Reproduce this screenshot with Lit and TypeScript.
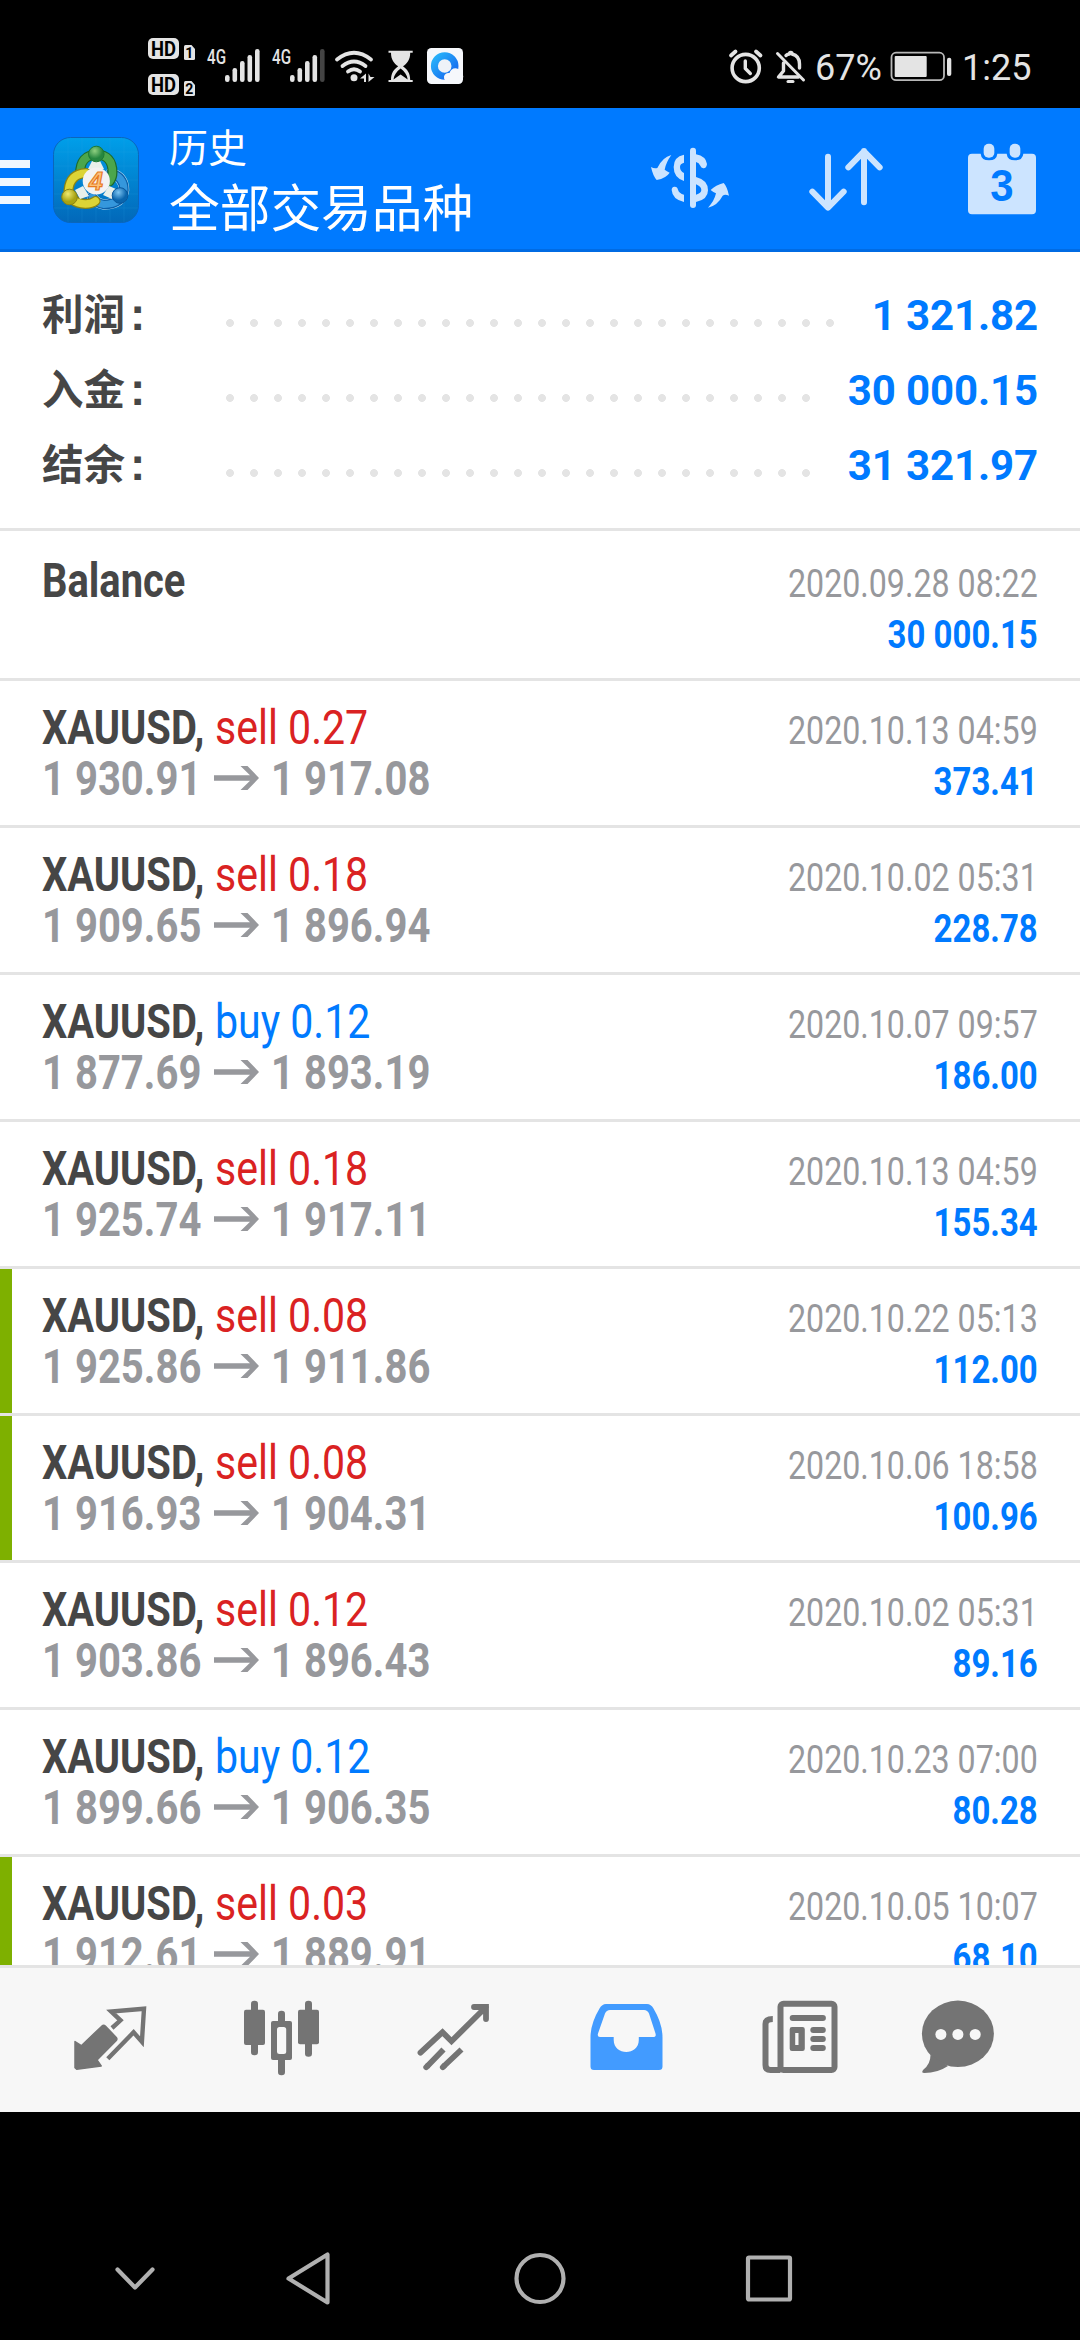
import { LitElement, html, css, svg } from "lit";
import { customElement, property } from "lit/decorators.js";
import { classMap } from "lit/directives/class-map.js";

interface Deal {
  symbol: string;
  side?: "buy" | "sell";
  volume?: string;
  open?: string;
  close?: string;
  time: string;
  profit: string;
  marked?: boolean;
}

const deal = (
  side: "buy" | "sell",
  volume: string,
  open: string,
  close: string,
  time: string,
  profit: string,
  marked = false,
): Deal => ({ symbol: "XAUUSD,", side, volume, open, close, time, profit, marked });

const DEALS: Deal[] = [
  { symbol: "Balance", time: "2020.09.28 08:22", profit: "30 000.15" },
  deal("sell", "0.27", "1 930.91", "1 917.08", "2020.10.13 04:59", "373.41"),
  deal("sell", "0.18", "1 909.65", "1 896.94", "2020.10.02 05:31", "228.78"),
  deal("buy", "0.12", "1 877.69", "1 893.19", "2020.10.07 09:57", "186.00"),
  deal("sell", "0.18", "1 925.74", "1 917.11", "2020.10.13 04:59", "155.34"),
  deal("sell", "0.08", "1 925.86", "1 911.86", "2020.10.22 05:13", "112.00", true),
  deal("sell", "0.08", "1 916.93", "1 904.31", "2020.10.06 18:58", "100.96", true),
  deal("sell", "0.12", "1 903.86", "1 896.43", "2020.10.02 05:31", "89.16"),
  deal("buy", "0.12", "1 899.66", "1 906.35", "2020.10.23 07:00", "80.28"),
  deal("sell", "0.03", "1 912.61", "1 889.91", "2020.10.05 10:07", "68.10", true),
];

@customElement("status-bar")
export class StatusBar extends LitElement {
  static styles = css`
    :host {
      display: flex;
      height: 108px;
      background: #000;
      color: #e4e4e4;
      font: 36px/50px Roboto, sans-serif;
      box-sizing: border-box;
      padding: 0 50px 0 146px;
    }
    svg {
      display: block;
      flex: none;
    }
    .spacer {
      flex: 1;
    }
    .hd {
      font: bold 20px Roboto, sans-serif;
    }
    .sim {
      font: bold 14px Roboto, sans-serif;
    }
    .net {
      font: 500 21px Roboto, sans-serif;
    }
    .percent,
    .clock {
      margin-top: 43px;
      height: 50px;
      white-space: nowrap;
    }
    .percent {
      width: 75px;
    }
    .clock {
      width: 68px;
    }
  `;

  private bars(x: number, dim: boolean) {
    return [75, 68, 61, 55, 49].map(
      (top, i) =>
        svg`<rect x=${x + i * 7.5} y=${top} width="4.6" height=${82 - top} rx="2.2" fill=${dim && i === 4 ? "#444" : "#e4e4e4"} />`,
    );
  }

  render() {
    return html`
      <svg width="324" height="108" viewBox="146 0 324 108" fill="#e4e4e4">
        <rect x="148" y="38" width="31" height="21" rx="5" />
        <rect x="148" y="74" width="31" height="21" rx="5" />
        <text class="hd" x="151" y="55.5" textLength="25" lengthAdjust="spacingAndGlyphs" fill="#000">HD</text>
        <text class="hd" x="151" y="91.5" textLength="25" lengthAdjust="spacingAndGlyphs" fill="#000">HD</text>
        <path d="M184 46.5q0-1.500 1.500-1.500h6l3.500 4v9.500q0 1.500-1.500 1.500h-8q-1.500 0-1.500-1.500z" />
        <path d="M184 82.500q0-1.500 1.500-1.500h6l3.500 4v9.500q0 1.500-1.500 1.500h-8q-1.500 0-1.500-1.500z" />
        <text class="sim" x="185.300" y="58" fill="#000">1</text>
        <text class="sim" x="185.300" y="94" fill="#000">2</text>
        <text class="net" x="207" y="64" textLength="19" lengthAdjust="spacingAndGlyphs">4G</text>
        ${this.bars(225, false)}
        <text class="net" x="272" y="64" textLength="19" lengthAdjust="spacingAndGlyphs">4G</text>
        ${this.bars(290, true)}
        <g fill="none" stroke="#e4e4e4" stroke-width="3.800" stroke-linecap="round">
          <path d="M337 59.500q17-13.500 34 0" />
          <path d="M342.500 66q11.500-9 23 0" />
          <path d="M348 71.500q6-4.500 12 0" />
        </g>
        <circle cx="354" cy="77.700" r="3.500" />
        <path d="M360 78.500l6-5v8.500h-2v-3.500zM368.500 73.500v8.500l6-5h-4z" />
        <path d="M388.500 50.700h24.200v2h-2.500c0 7-3 10.500-7.200 13.600 4.200 3.100 7.200 6.700 7.200 13.600h2.500v2.100h-24.200v-2.100h2.500c0-7 3-10.500 7.200-13.600-4.200-3.100-7.200-6.600-7.200-13.600h-2.500z" />
        <path d="M393.500 79.500c.5-4.500 3.200-8 7.100-11 3.900 3 6.600 6.500 7.100 11l-7.100-5z" fill="#000" />
        <rect x="427" y="48" width="36" height="36" rx="4.500" fill="#f6f8fc" />
        <defs>
          <linearGradient id="ring" x1="0" y1="0" x2="1" y2="1">
            <stop offset="0" stop-color="#28b4fa" />
            <stop offset="1" stop-color="#1565ee" />
          </linearGradient>
        </defs>
        <circle cx="444.700" cy="66" r="10.300" fill="#eef2f8" stroke="url(#ring)" stroke-width="7" />
        <path d="M449 81.500q-5.500-.500-5-5 1-4 5.500-3.500 2-5.500 7.500-4.500 3.500 1 4 4.500 3 2 2 5-1 3.500-5 3.500z" fill="#f6f8fc" />
      </svg>
      <span class="spacer"></span>
      <svg width="87" height="108" viewBox="728 0 87 108" fill="none" stroke="#e4e4e4" stroke-linecap="round" stroke-linejoin="round">
        <circle cx="745.700" cy="68" r="13.600" stroke-width="3.600" />
        <path d="M745.300 61v7.500l5 5" stroke-width="3.400" />
        <path d="M731 55.500l4.500-4M760.500 55.500l-4.500-4" stroke-width="3.800" />
        <path d="M777.500 53.500l26 26.500" stroke-width="3" />
        <path d="M783.500 63v8l-5 6h20" stroke-width="3.400" />
        <path d="M786 55.500c1-1 2-1.500 3.500-1.500a1.300 1.300 0 1 1 2.500 0c6 1.500 7.500 5.500 7.500 10v4" stroke-width="3.400" />
        <path d="M788 81.500h5" stroke-width="3" />
      </svg>
      <span class="percent">67%</span>
      <svg width="72" height="108" viewBox="888 0 72 108">
        <rect x="889.500" y="52.700" width="52.500" height="27.500" rx="4.500" fill="none" stroke="#b8b8b8" stroke-width="1.800" />
        <rect x="892.700" y="56" width="32" height="21" rx="1" fill="#e4e4e4" />
        <rect x="945" y="57.700" width="4.300" height="18.300" rx="2" fill="#e4e4e4" />
      </svg>
      <span class="clock">1:25</span>
    `;
  }
}

@customElement("app-header")
export class AppHeader extends LitElement {
  static styles = css`
    :host {
      display: flex;
      align-items: flex-start;
      height: 144px;
      box-sizing: border-box;
      background: #007aff;
      border-bottom: 3px solid #006be3;
      color: #fff;
      font-family: "Noto Sans CJK SC", sans-serif;
    }
    svg {
      display: block;
      flex: none;
    }
    .menu {
      display: grid;
      gap: 10px;
      width: 30px;
      margin-top: 52px;
    }
    .menu i {
      height: 8px;
      background: #f0f7ff;
    }
    .logo {
      margin: 29px 0 0 23px;
    }
    .digit {
      font: bold italic 25px "Liberation Sans", sans-serif;
    }
    .titles {
      margin: 13px 0 0 30px;
      width: 479px;
      white-space: nowrap;
    }
    .section {
      font-size: 39px;
      line-height: 48px;
    }
    .filter {
      font-size: 50.7px;
      line-height: 72px;
    }
    .action {
      margin-top: 36px;
    }
    .sort {
      margin-left: 76px;
    }
    .calendar {
      margin: 34px 0 0 82px;
    }
    .day {
      font: bold 132px "Liberation Sans", sans-serif;
    }
  `;

  render() {
    return html`
      <div class="menu"><i></i><i></i><i></i></div>
      <svg class="logo" width="86" height="86" viewBox="0 0 86 86">
        <defs>
          <linearGradient id="bg" x1="0" y1="0" x2="0" y2="1">
            <stop offset="0" stop-color="#009fe9" />
            <stop offset="1" stop-color="#0268b9" />
          </linearGradient>
          <radialGradient id="green" cx=".4" cy=".3"><stop offset="0" stop-color="#8fd080" /><stop offset="1" stop-color="#26863f" /></radialGradient>
          <radialGradient id="yellow" cx=".4" cy=".3"><stop offset="0" stop-color="#f0ea70" /><stop offset="1" stop-color="#a8a312" /></radialGradient>
          <radialGradient id="blue" cx=".4" cy=".3"><stop offset="0" stop-color="#7cc4f2" /><stop offset="1" stop-color="#0a65ad" /></radialGradient>
        </defs>
        <rect x=".5" y=".5" width="85" height="85" rx="17" fill="url(#bg)" stroke="#0b66bb" />
        <path d="M15 1v84M29 1v84M43 1v84M57 1v84M71 1v84M1 15h84M1 29h84M1 43h84M1 57h84M1 71h84" stroke="#35a8e8" stroke-opacity=".16" />
        <g fill="none" stroke-linecap="round">
          <path d="M58 36q13 4 13 17-2 14-20 14.500-8-1-12-8" stroke="#b4ddf5" stroke-width="10.500" />
          <path d="M58 36q13 4 13 17-2 14-20 14.500-8-1-12-8" stroke="#0c5fa8" stroke-width="9.500" />
          <path d="M58 36q13 4 13 17-2 14-20 14.500-8-1-12-8" stroke="#3597dc" stroke-width="7" />
          <path d="M27 37q0-19 16.500-19.500 16 .5 16 18 0 5-3 9" stroke="#1d6b2d" stroke-width="10" />
          <path d="M27 37q0-19 16.500-19.500 16 .5 16 18 0 5-3 9" stroke="#4ba64c" stroke-width="7.500" />
          <path d="M33 36q-16 1-17.500 17 1 13 17 14 6 0 10-3" stroke="#8c8412" stroke-width="10" />
          <path d="M33 36q-16 1-17.500 17 1 13 17 14 6 0 10-3" stroke="#dcd436" stroke-width="7.500" />
        </g>
        <path d="M39 24h8l4 8h-16zM22 53l8-4 6 10-9 3zM63 52l-7-3-6 9 9 4z" fill="#e9f0ea" />
        <circle cx="43.300" cy="17" r="7.800" fill="url(#green)" stroke="#1d7a35" />
        <circle cx="16.500" cy="60" r="7.800" fill="url(#yellow)" stroke="#8c8412" />
        <circle cx="67" cy="58.500" r="7.800" fill="url(#blue)" stroke="#08569b" />
        <circle cx="43.300" cy="44" r="13.600" fill="#f3f2f2" />
        <text class="digit" x="36" y="53" fill="#fbc27a" stroke="#e87a1e" stroke-width="1.200">4</text>
      </svg>
      <div class="titles">
        <div class="section">历史</div>
        <div class="filter">全部交易品种</div>
      </div>
      <svg class="action" width="84" height="72" viewBox="84 132 252 216" fill="#cce4ff">
        <rect x="210" y="143" width="18" height="181" rx="9" />
        <path d="M192 164v24q-12 3-12 13 0 12 12 18v24q-31-10-31-42 0-31 31-37z" />
        <path d="M155 270q0-9 8-10 9-1 11 9 3 11 18 15v22q-35-8-37-36z" />
        <path d="M228 163q30 6 33 29-2 14-11 13-7-1-9-8-4-9-13-11z" />
        <path fill-rule="evenodd" d="M228 231q36 9 36 40 0 28-36 35zM228 253v31q16-5 16-14 0-10-16-17z" />
        <path d="M93 201q10 6 19 3 15-32 42-39-16 22-20 44 6 5 15 9-10 16-39 22-11-12-17-39z" />
        <path d="M327 287q-12-5-19 0-15 29-44 36 19-20 24-43-8-3-16-10 15-15 39-21 10 10 16 38z" />
      </svg>
      <svg class="action sort" width="76" height="72" viewBox="564 132 228 216" fill="none" stroke="#cce4ff" stroke-width="18" stroke-linecap="round" stroke-linejoin="round">
        <path d="M624 170v152M577 275l47 48 47-48M732 307V153M685 202l47-48 47 48" />
      </svg>
      <svg class="calendar" width="72" height="74" viewBox="1038 126 216 222">
        <path d="M1056 161h26q2 20 25 20t25-20h28q2 20 25 20t25-20h26q12 0 12 12v158q0 12-12 12h-180q-12 0-12-12V173q0-12 12-12z" fill="#cce4ff" />
        <rect x="1091" y="131" width="32" height="42" rx="15" fill="#cce4ff" />
        <rect x="1169" y="131" width="32" height="42" rx="15" fill="#cce4ff" />
        <text class="day" x="1146" y="304" text-anchor="middle" textLength="70" lengthAdjust="spacingAndGlyphs" fill="#007aff">3</text>
      </svg>
    `;
  }
}

@customElement("account-summary")
export class AccountSummary extends LitElement {
  static styles = css`
    :host {
      display: block;
      height: 279px;
      box-sizing: border-box;
      padding: 23px 42px 0;
      border-bottom: 3px solid #e4e4e4;
      background: #fff;
    }
    .line {
      display: flex;
      height: 75px;
      line-height: 75px;
      white-space: nowrap;
    }
    .label {
      width: 176px;
      flex: none;
      color: #464646;
      font: bold 41.500px/75px "Noto Sans CJK SC", sans-serif;
    }
    .colon {
      font: bold 46px/60px "Liberation Sans", sans-serif;
      margin-left: 5px;
    }
    .dots {
      flex: 1;
      height: 8px;
      margin-top: 44px;
      background: radial-gradient(circle, #e4e4e4 3.600px, transparent 4.200px) 0 0 / 24px 8px repeat-x;
    }
    .value {
      margin-left: auto;
      color: #007aff;
      font: bold 42px/75px Roboto, sans-serif;
      letter-spacing: -0.120px;
      padding-top: 3px;
    }
  `;

  private line(label: string, value: string, count: number) {
    return html`<div class="line">
      <span class="label">${label}<span class="colon">:</span></span>
      <span class="dots" style="max-width:${count * 24}px"></span>
      <span class="value">${value}</span>
    </div>`;
  }

  render() {
    return html`
      ${this.line("利润", "1 321.82", 26)}
      ${this.line("入金", "30 000.15", 25)}
      ${this.line("结余", "31 321.97", 25)}
    `;
  }
}

@customElement("deal-row")
export class DealRow extends LitElement {
  @property({ attribute: false }) deal!: Deal;

  static styles = css`
    .row {
      display: flex;
      height: 147px;
      box-sizing: border-box;
      border-bottom: 3px solid #e4e4e4;
      padding-right: 42px;
      background: #fff;
      font-family: Roboto, sans-serif;
      white-space: nowrap;
    }
    .row::before {
      content: "";
      width: 12px;
      flex: none;
    }
    .marked::before {
      background: #7eb000;
    }
    .main {
      flex: 1;
      padding: 21px 0 0 30px;
      font-size: 48px;
      line-height: 51px;
    }
    .side {
      font-size: 39px;
      line-height: 51px;
      text-align: right;
      padding-top: 25px;
    }
    .balance {
      height: 150px;
    }
    .balance .main {
      padding-top: 24px;
    }
    .balance .side {
      padding-top: 28px;
    }
    .line {
      display: flex;
      height: 51px;
    }
    .symbol,
    .open,
    .close {
      font-weight: bold;
      transform: scaleX(0.834);
      transform-origin: left;
    }
    .symbol {
      width: 173px;
      color: #464646;
      transform: scaleX(0.831);
    }
    .trade {
      transform: scaleX(0.855);
      transform-origin: left;
    }
    .sell {
      color: #da2222;
    }
    .buy {
      color: #007aff;
    }
    .open,
    .close {
      color: #97989c;
    }
    .open {
      width: 172px;
    }
    .arrow {
      display: block;
      width: 46px;
      height: 24px;
      margin: 13px 11px 0 0;
      flex: none;
    }
    .time {
      color: #97989c;
      transform: scaleX(0.825);
      transform-origin: right;
    }
    .profit {
      color: #007aff;
      font-weight: bold;
      transform: scaleX(0.845);
      transform-origin: right;
    }
  `;

  render() {
    const d = this.deal;
    return html`
      <div class=${classMap({ row: true, balance: !d.side, marked: !!d.marked })}>
        <div class="main">
          <div class="line">
            <span class="symbol">${d.symbol}</span>
            ${d.side ? html`<span class="trade ${d.side}">${d.side} ${d.volume}</span>` : ""}
          </div>
          ${d.side
            ? html`<div class="line">
                <span class="open">${d.open}</span>
                <svg class="arrow" viewBox="0 0 46 24">
                  <path d="M0 9.300h36l-9.500-9.300h7l11.500 12-11.500 12h-7l9.500-9.300h-36z" fill="#97989c" />
                </svg>
                <span class="close">${d.close}</span>
              </div>`
            : ""}
        </div>
        <div class="side">
          <div class="time">${d.time}</div>
          <div class="profit">${d.profit}</div>
        </div>
      </div>
    `;
  }
}

@customElement("tab-bar")
export class TabBar extends LitElement {
  static styles = css`
    :host {
      display: grid;
      grid-template-columns: repeat(6, 172px);
      justify-items: center;
      height: 147px;
      box-sizing: border-box;
      padding-left: 24px;
      border-top: 3px solid #e4e4e4;
      background: #f7f7f7;
    }
    svg {
      display: block;
      margin-top: 24px;
      color: #747474;
    }
  `;

  render() {
    return html`
      <svg width="96" height="96" viewBox="62 1992 96 96">
        <path d="M75 2041.500l6.300 4.200 21-20q1.500-1.200 3 .3l11 11.500q1.200 1.500 0 3L97 2060l4.200 6-24.500 3.200-1.700-1.500z" fill="currentColor" stroke="currentColor" stroke-width="1.500" stroke-linejoin="round" />
        <path d="M112 2028l8.500-7.700-9.300-8.800 32.800-2.800-2.100 33-8.300-9.400-25.800 26.400" fill="none" stroke="currentColor" stroke-width="4.400" />
      </svg>
      <svg width="96" height="96" viewBox="234 1992 96 96" fill="currentColor">
        <rect x="244" y="2009.700" width="21" height="35.300" rx="2" />
        <rect x="251" y="2000.700" width="7" height="54.600" rx="3.300" />
        <rect x="271" y="2021" width="21" height="39" rx="2" />
        <rect x="278" y="2010.700" width="7" height="64.600" rx="3.300" />
        <rect x="277" y="2027" width="9.200" height="27" rx="2.500" fill="#f7f7f7" />
        <rect x="298" y="2009.700" width="21" height="34.600" rx="2" />
        <rect x="305" y="2000.700" width="7" height="56" rx="3.300" />
      </svg>
      <svg width="96" height="96" viewBox="406 1992 96 96" fill="none" stroke="currentColor" stroke-width="5.800">
        <path d="M420.500 2052.700l22-20.500 9 9L486 2007M474 2007h12v12" stroke-linecap="round" />
        <path d="M427 2066.500l16.500-17M443.500 2066.500l18-17" />
        <path d="M426.200 2067.200l1-1M442.800 2067.200l1-1" stroke-linecap="round" />
      </svg>
      <svg width="96" height="96" viewBox="578 1992 96 96">
        <path fill-rule="evenodd" fill="#429bff" d="M606 2004h41q4 0 6.500 4.500 9 15 9 29v29q0 3.500-3.500 3.500h-65q-3.500 0-3.500-3.500v-29q0-14 9-29 2.500-4.500 6.500-4.500zM610 2010q-3.500 0-5 3.500l-7 20q-1 3.500 2 3.500h13.700v3c0 16 25.100 16 25.100 0v-3h14.200q3.500 0 2.500-3.500l-6.500-20q-1.500-3.500-5-3.500z" />
      </svg>
      <svg width="96" height="96" viewBox="750 1992 96 96" fill="none" stroke="currentColor" stroke-width="6">
        <rect x="780.500" y="2003.700" width="54" height="66.300" rx="3" />
        <path d="M772.800 2019q-7.300 0-7.300 5v41q0 5 5 5h10M792.700 2018h30.200" />
        <path d="M792.700 2018h30.200" stroke-linecap="round" />
        <g fill="currentColor" stroke="none">
          <path fill-rule="evenodd" d="M792 2027h10.500q2.300 0 2.300 2.300v19.400q0 2.300-2.300 2.300H792q-2.300 0-2.300-2.300v-19.400q0-2.300 2.300-2.300zM795.200 2033v12h3.300v-12z" />
          <rect x="810.300" y="2027" width="15.500" height="6" rx="3" />
          <rect x="810.300" y="2036" width="15.500" height="6" rx="3" />
          <rect x="810.300" y="2045" width="15.500" height="6" rx="3" />
        </g>
      </svg>
      <svg width="96" height="96" viewBox="922 1992 96 96" overflow="visible" fill="currentColor">
        <ellipse cx="957.900" cy="2033.800" rx="36" ry="33.200" />
        <path d="M930.500 2055q0 9-7 14.500-3 3.500 1 3.500 13 0 23.500-7z" />
        <g fill="#f7f7f7">
          <circle cx="940.900" cy="2034.400" r="5.500" />
          <circle cx="957.900" cy="2034.400" r="5.500" />
          <circle cx="975.200" cy="2034.400" r="5.500" />
        </g>
      </svg>
    `;
  }
}

@customElement("system-nav")
export class SystemNav extends LitElement {
  static styles = css`
    :host {
      display: flex;
      align-items: center;
      height: 228px;
      box-sizing: border-box;
      padding: 106px 0 0 104px;
      background: #000;
    }
    svg {
      display: block;
      flex: none;
      fill: none;
      stroke: #b0b0b0;
      stroke-width: 4.200px;
      stroke-linejoin: round;
      stroke-linecap: round;
    }
    .back {
      margin-left: 114px;
    }
    .home {
      margin-left: 172px;
    }
    .recent {
      margin-left: 169px;
    }
  `;

  render() {
    return html`
      <svg width="60" height="60" viewBox="0 0 60 60"><path d="M13.500 20.500L31 38.500l17.500-18" /></svg>
      <svg class="back" width="60" height="60" viewBox="0 0 60 60"><path d="M10.500 29.500l39-24v48z" /></svg>
      <svg class="home" width="60" height="60" viewBox="0 0 60 60"><circle cx="30" cy="29.500" r="23.500" /></svg>
      <svg class="recent" width="60" height="60" viewBox="0 0 60 60"><rect x="9" y="8.500" width="42" height="42" rx="1" /></svg>
    `;
  }
}

@customElement("app-root")
export class AppRoot extends LitElement {
  static styles = css`
    :host {
      display: flex;
      flex-direction: column;
      width: 1080px;
      height: 2340px;
      overflow: hidden;
      background: #fff;
    }
    .history {
      height: 1434px;
      overflow: hidden;
    }
  `;

  render() {
    return html`
      <status-bar></status-bar>
      <app-header></app-header>
      <account-summary></account-summary>
      <div class="history">${DEALS.map((d) => html`<deal-row .deal=${d}></deal-row>`)}</div>
      <tab-bar></tab-bar>
      <system-nav></system-nav>
    `;
  }
}
